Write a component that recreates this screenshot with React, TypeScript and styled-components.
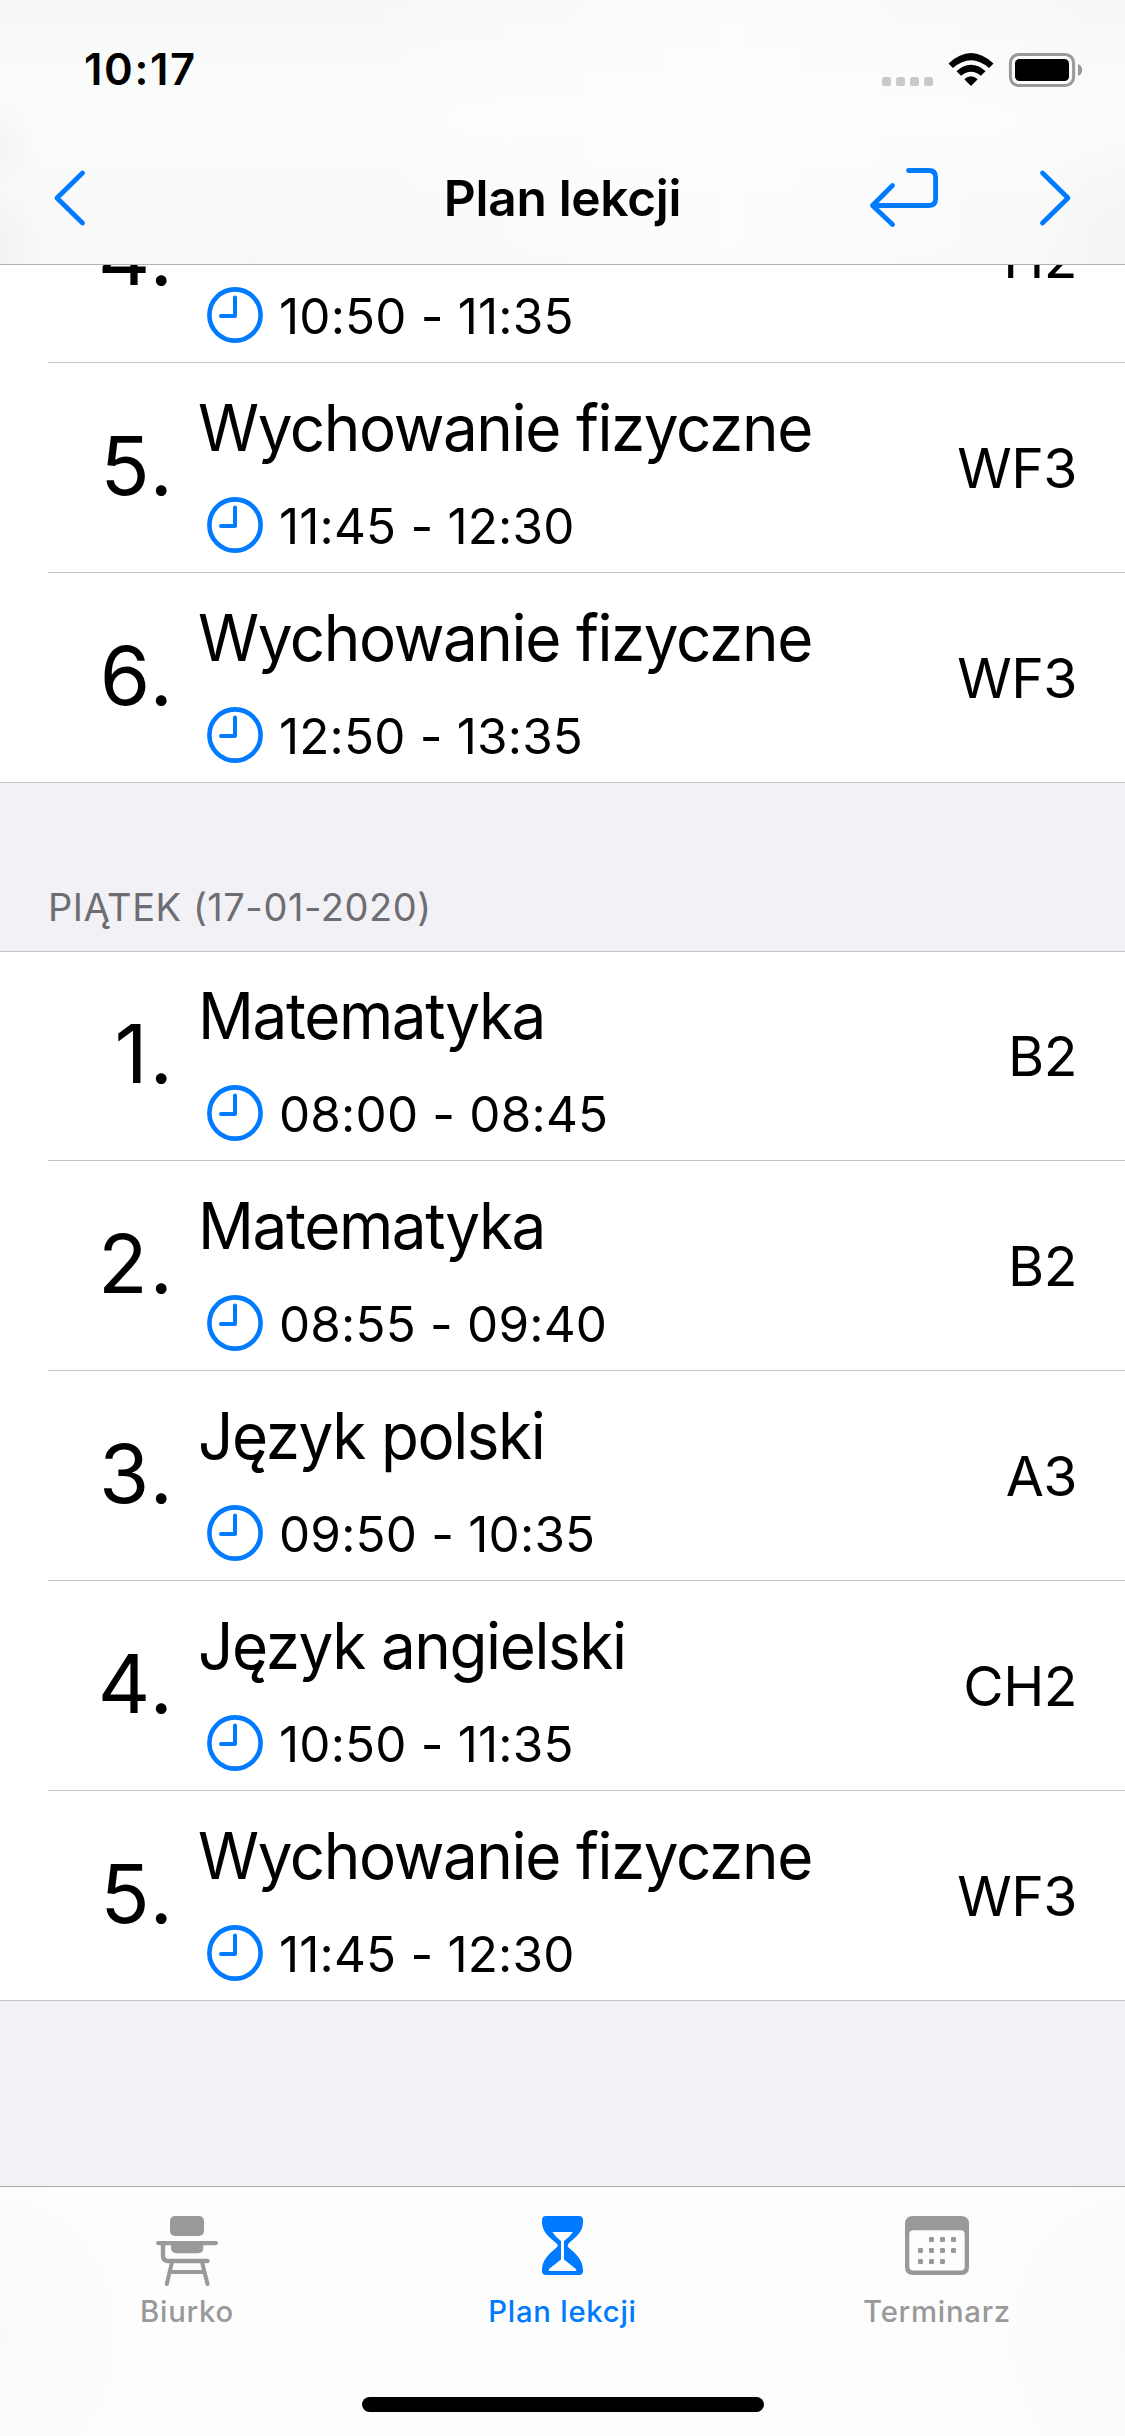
import React from "react";
import styled, { createGlobalStyle } from "styled-components";

const BLUE = "#007aff";
const GRAY = "#999999";

const GlobalStyle = createGlobalStyle`
  * { box-sizing: border-box; }
  body { margin: 0; background: #f2f1f6; }
`;

const Screen = styled.div`
  width: 1125px;
  height: 2436px;
  display: flex;
  flex-direction: column;
  overflow: hidden;
  background: #f2f1f6;
  color: #000;
  font-family: Inter, "Noto Sans", sans-serif;
  font-feature-settings: "calt" 0;
  white-space: nowrap;
`;

const Header = styled.header`
  flex: none;
  height: 265px;
  border-bottom: 1px solid #b2b2b2;
  background:
    radial-gradient(ellipse 40px 60px at 0 245px, #f2f2f2, transparent),
    radial-gradient(ellipse 40px 50px at 0 145px, #f4f4f4, transparent),
    radial-gradient(ellipse 90px 120px at 1125px 250px, #f3f4f4, transparent),
    linear-gradient(90deg, transparent 30%, rgba(255, 255, 255, 0.6) 65%, transparent 100%),
    linear-gradient(180deg, #f7f7f7 0, #f9fafa 60px, #fbfcfc 120px, #f9f9f9 200px, #f8f8f8 100%);
`;

const StatusBar = styled.div`
  height: 132px;
  padding: 43px 42px 0 84px;
  display: flex;
  justify-content: space-between;
`;

const Clock = styled.time`
  font-size: 43.6px;
  line-height: 53px;
  font-weight: 600;
  letter-spacing: 1.6px;
`;

const StatusIcons = styled.div`
  display: flex;
  padding-top: 9px;
`;

const NavBar = styled.nav`
  height: 132px;
  padding: 0 51px;
  display: grid;
  grid-template-columns: 1fr auto 1fr;
  align-items: center;
`;

const NavTitle = styled.h1`
  margin: 0;
  font-size: 49.6px;
  line-height: 60px;
  font-weight: 600;
  letter-spacing: -0.3px;
`;

const NavActions = styled.div`
  display: flex;
  align-items: center;
  justify-content: flex-end;
  gap: 98px;
`;

const Scroll = styled.main`
  flex: none;
  height: 1921px;
  overflow: hidden;
  display: flex;
  flex-direction: column;
  justify-content: flex-end;
  padding-bottom: 185px;
`;

const SectionHeader = styled.h2`
  flex: none;
  margin: 0;
  height: 168px;
  padding: 101px 0 0 48px;
  font-size: 38px;
  line-height: 46px;
  font-weight: 400;
  letter-spacing: 0.55px;
  color: #6d6d72;
`;

const Lessons = styled.ol<{ $topLine?: boolean }>`
  flex: none;
  margin: 0;
  padding: 0;
  list-style: none;
  background: #fff;
  border-bottom: 1px solid #c4c4c6;
  box-shadow: ${(p) => (p.$topLine ? "inset 0 1px 0 #c4c4c6" : "none")};
`;

const Row = styled.li`
  height: 210px;
  margin-left: 48px;
  padding-right: 48px;
  display: grid;
  grid-template-columns: 127px 1fr auto;
  border-bottom: 1px solid #c4c4c6;
  &:last-child { border-bottom: 0; height: 209px; }
`;

const Position = styled.span`
  padding-top: 54px;
  text-align: right;
  font-size: 81.4px;
  line-height: 98px;
  letter-spacing: 2px;
`;

const Details = styled.div`
  padding: 26px 0 0 23px;
`;

const Subject = styled.div`
  height: 77px;
  font-size: 64px;
  line-height: 77px;
  letter-spacing: -1.45px;
  transform: scaleX(0.968);
  transform-origin: 0 0;
`;

const TimeRow = styled.div`
  display: flex;
  margin: 31px 0 0 9px;
  align-items: flex-start;
  gap: 16px;
`;

const TimeText = styled.span`
  margin-top: -1px;
  font-size: 49.4px;
  line-height: 60px;
  letter-spacing: 0.2px;
`;

const Room = styled.span`
  padding-top: 71px;
  font-size: 55.3px;
  line-height: 67px;
  letter-spacing: -0.5px;
`;

const TabBar = styled.footer`
  flex: none;
  height: 250px;
  border-top: 1px solid #a9a9ab;
  background:
    radial-gradient(ellipse 150px 180px at 0 60%, #fafafa, transparent),
    radial-gradient(ellipse 150px 180px at 100% 60%, #fafafa, transparent),
    #fdfdfd;
  display: flex;
  flex-direction: column;
  justify-content: space-between;
  align-items: center;
  padding-bottom: 24px;
`;

const Tabs = styled.div`
  width: 100%;
  display: grid;
  grid-template-columns: 374px 377px 372px;
`;

const Tab = styled.div<{ $active?: boolean }>`
  display: flex;
  flex-direction: column;
  align-items: center;
  padding-top: 29px;
  color: ${(p) => (p.$active ? BLUE : GRAY)};
  font-size: 29.3px;
  line-height: 36px;
  font-weight: 500;
  letter-spacing: 0.75px;
`;

const TabIcon = styled.div`
  height: 78px;
`;

const HomeIndicator = styled.div`
  width: 402px;
  height: 15px;
  border-radius: 8px;
  background: #000;
`;

const ClockIcon = () => (
  <svg width="56" height="56" viewBox="0 0 56 56" fill="none" stroke={BLUE} strokeWidth="4.6" strokeLinecap="round" strokeLinejoin="round">
    <circle cx="28" cy="28" r="25.6" />
    <path d="M28 10.5V29H14" strokeWidth="4" />
  </svg>
);

const Chevron = ({ right }: { right?: boolean }) => (
  <svg width="37" height="60" viewBox="0 0 37 60" fill="none" stroke={BLUE} strokeWidth="4.8" strokeLinecap="round" strokeLinejoin="round">
    <path d={right ? "M5.5 5L31 30 5.5 55" : "M31.5 5L6 30 31.5 55"} />
  </svg>
);

const ReturnIcon = () => (
  <svg width="70" height="60" viewBox="869 167 70 60" fill="none" stroke={BLUE} strokeWidth="4.8" strokeLinecap="round" strokeLinejoin="round">
    <path d="M908.5 169.5H929Q935.6 169.5 935.6 176.5V197.5Q935.6 204.5 929 204.5H873" />
    <path d="M892.5 184.5L872.5 204.5 892.5 223.5" />
  </svg>
);

const StatusGlyphs = () => (
  <svg width="202" height="36" viewBox="881 51 202 36">
    {[882, 896, 910, 924].map((x) => (
      <rect key={x} x={x} y="76" width="9" height="9" rx="2.6" fill="#c9c9c9" />
    ))}
    <path d="M948.5 62.5Q971 41.5 993.5 62.5L989 67Q971 51.5 953 67Z" />
    <path d="M956.5 70.2Q971 57.5 985.5 70.2L980.9 74.8Q971 66.5 961.1 74.8Z" />
    <path d="M964.3 78.2Q971 72.5 977.7 78.2L971 85Z" />
    <rect x="1010.4" y="53.4" width="63.2" height="31.2" rx="8.5" fill="none" stroke="#999" strokeWidth="3" />
    <rect x="1015" y="58" width="54" height="22" rx="4.5" />
    <path d="M1078 63Q1082.2 64.5 1082.2 69T1078 75Z" fill="#999" />
  </svg>
);

const DeskIcon = () => (
  <svg width="62" height="70" viewBox="0 0 62 70" fill={GRAY}>
    <rect x="14" y="0" width="34" height="20" rx="5" />
    <rect x="0" y="25" width="62" height="4.2" rx="2.1" />
    <path d="M15 28H47.3V32Q47.3 37.2 42 37.2H20.5Q15 37.2 15 32Z" />
    <path d="M7 28V40Q7 45 12 45H51.5" fill="none" stroke={GRAY} strokeWidth="4.4" strokeLinecap="round" />
    <path d="M16 46L10.8 68M46 46L51.5 68M14 56H48" fill="none" stroke={GRAY} strokeWidth="4" strokeLinecap="round" />
  </svg>
);

const HourglassIcon = () => (
  <svg width="41" height="60" viewBox="0 0 41 60" fill={BLUE} fillRule="evenodd">
    <path d="M4 0H37Q41 0 41 4V6C41 16 34 21 26.5 27.5Q25 29.5 26.5 31.5C34 38 41 44 41 54V55Q41 59 37 59H4Q0 59 0 55V54C0 44 7 38 14.5 31.5Q17 29.5 14.5 27.5C7 21 0 16 0 6V4Q0 0 4 0ZM10.3 16Q14 21.5 19 25V43.5L7 53Q6 55 8 55H33Q35 55 34 53L22 43.5V25Q28 20.5 31 16Z" />
  </svg>
);

const CalendarIcon = () => (
  <svg width="64" height="60" viewBox="0 0 64 60">
    <path fill={GRAY} fillRule="evenodd" d="M8 0H56Q64 0 64 8V51Q64 59 56 59H8Q0 59 0 51V8Q0 0 8 0ZM8.5 14.3Q4.3 14.3 4.3 18.5V50.5Q4.3 54.6 8.5 54.6H55.5Q59.7 54.6 59.7 50.5V18.5Q59.7 14.3 55.5 14.3Z" />
    {[[24, 21], [35, 21], [46, 21], [13, 32], [24, 32], [35, 32], [46, 32], [13, 43], [24, 43], [35, 43]].map(([x, y]) => (
      <rect key={`${x}-${y}`} x={x} y={y} width="5" height="5" rx="1.2" fill={GRAY} />
    ))}
  </svg>
);

type Lesson = { no: number; subject?: string; time: string; room: string };

const thursday: Lesson[] = [
  { no: 4, time: "10:50 - 11:35", room: "H2" },
  { no: 5, subject: "Wychowanie fizyczne", time: "11:45 - 12:30", room: "WF3" },
  { no: 6, subject: "Wychowanie fizyczne", time: "12:50 - 13:35", room: "WF3" },
];

const friday: Lesson[] = [
  { no: 1, subject: "Matematyka", time: "08:00 - 08:45", room: "B2" },
  { no: 2, subject: "Matematyka", time: "08:55 - 09:40", room: "B2" },
  { no: 3, subject: "Język polski", time: "09:50 - 10:35", room: "A3" },
  { no: 4, subject: "Język angielski", time: "10:50 - 11:35", room: "CH2" },
  { no: 5, subject: "Wychowanie fizyczne", time: "11:45 - 12:30", room: "WF3" },
];

const LessonList = ({ lessons, topLine }: { lessons: Lesson[]; topLine?: boolean }) => (
  <Lessons $topLine={topLine}>
    {lessons.map((l) => (
      <Row key={l.no}>
        <Position>{l.no}.</Position>
        <Details>
          <Subject>{l.subject}</Subject>
          <TimeRow>
            <ClockIcon />
            <TimeText>{l.time}</TimeText>
          </TimeRow>
        </Details>
        <Room>{l.room}</Room>
      </Row>
    ))}
  </Lessons>
);

export default function App() {
  return (
    <Screen>
      <GlobalStyle />
      <Header>
        <StatusBar>
          <Clock>10:17</Clock>
          <StatusIcons>
            <StatusGlyphs />
          </StatusIcons>
        </StatusBar>
        <NavBar>
          <Chevron />
          <NavTitle>Plan lekcji</NavTitle>
          <NavActions>
            <ReturnIcon />
            <Chevron right />
          </NavActions>
        </NavBar>
      </Header>
      <Scroll>
        <LessonList lessons={thursday} />
        <SectionHeader>PIĄTEK (17-01-2020)</SectionHeader>
        <LessonList lessons={friday} topLine />
      </Scroll>
      <TabBar>
        <Tabs>
          <Tab>
            <TabIcon><DeskIcon /></TabIcon>
            Biurko
          </Tab>
          <Tab $active>
            <TabIcon><HourglassIcon /></TabIcon>
            Plan lekcji
          </Tab>
          <Tab>
            <TabIcon><CalendarIcon /></TabIcon>
            Terminarz
          </Tab>
        </Tabs>
        <HomeIndicator />
      </TabBar>
    </Screen>
  );
}
